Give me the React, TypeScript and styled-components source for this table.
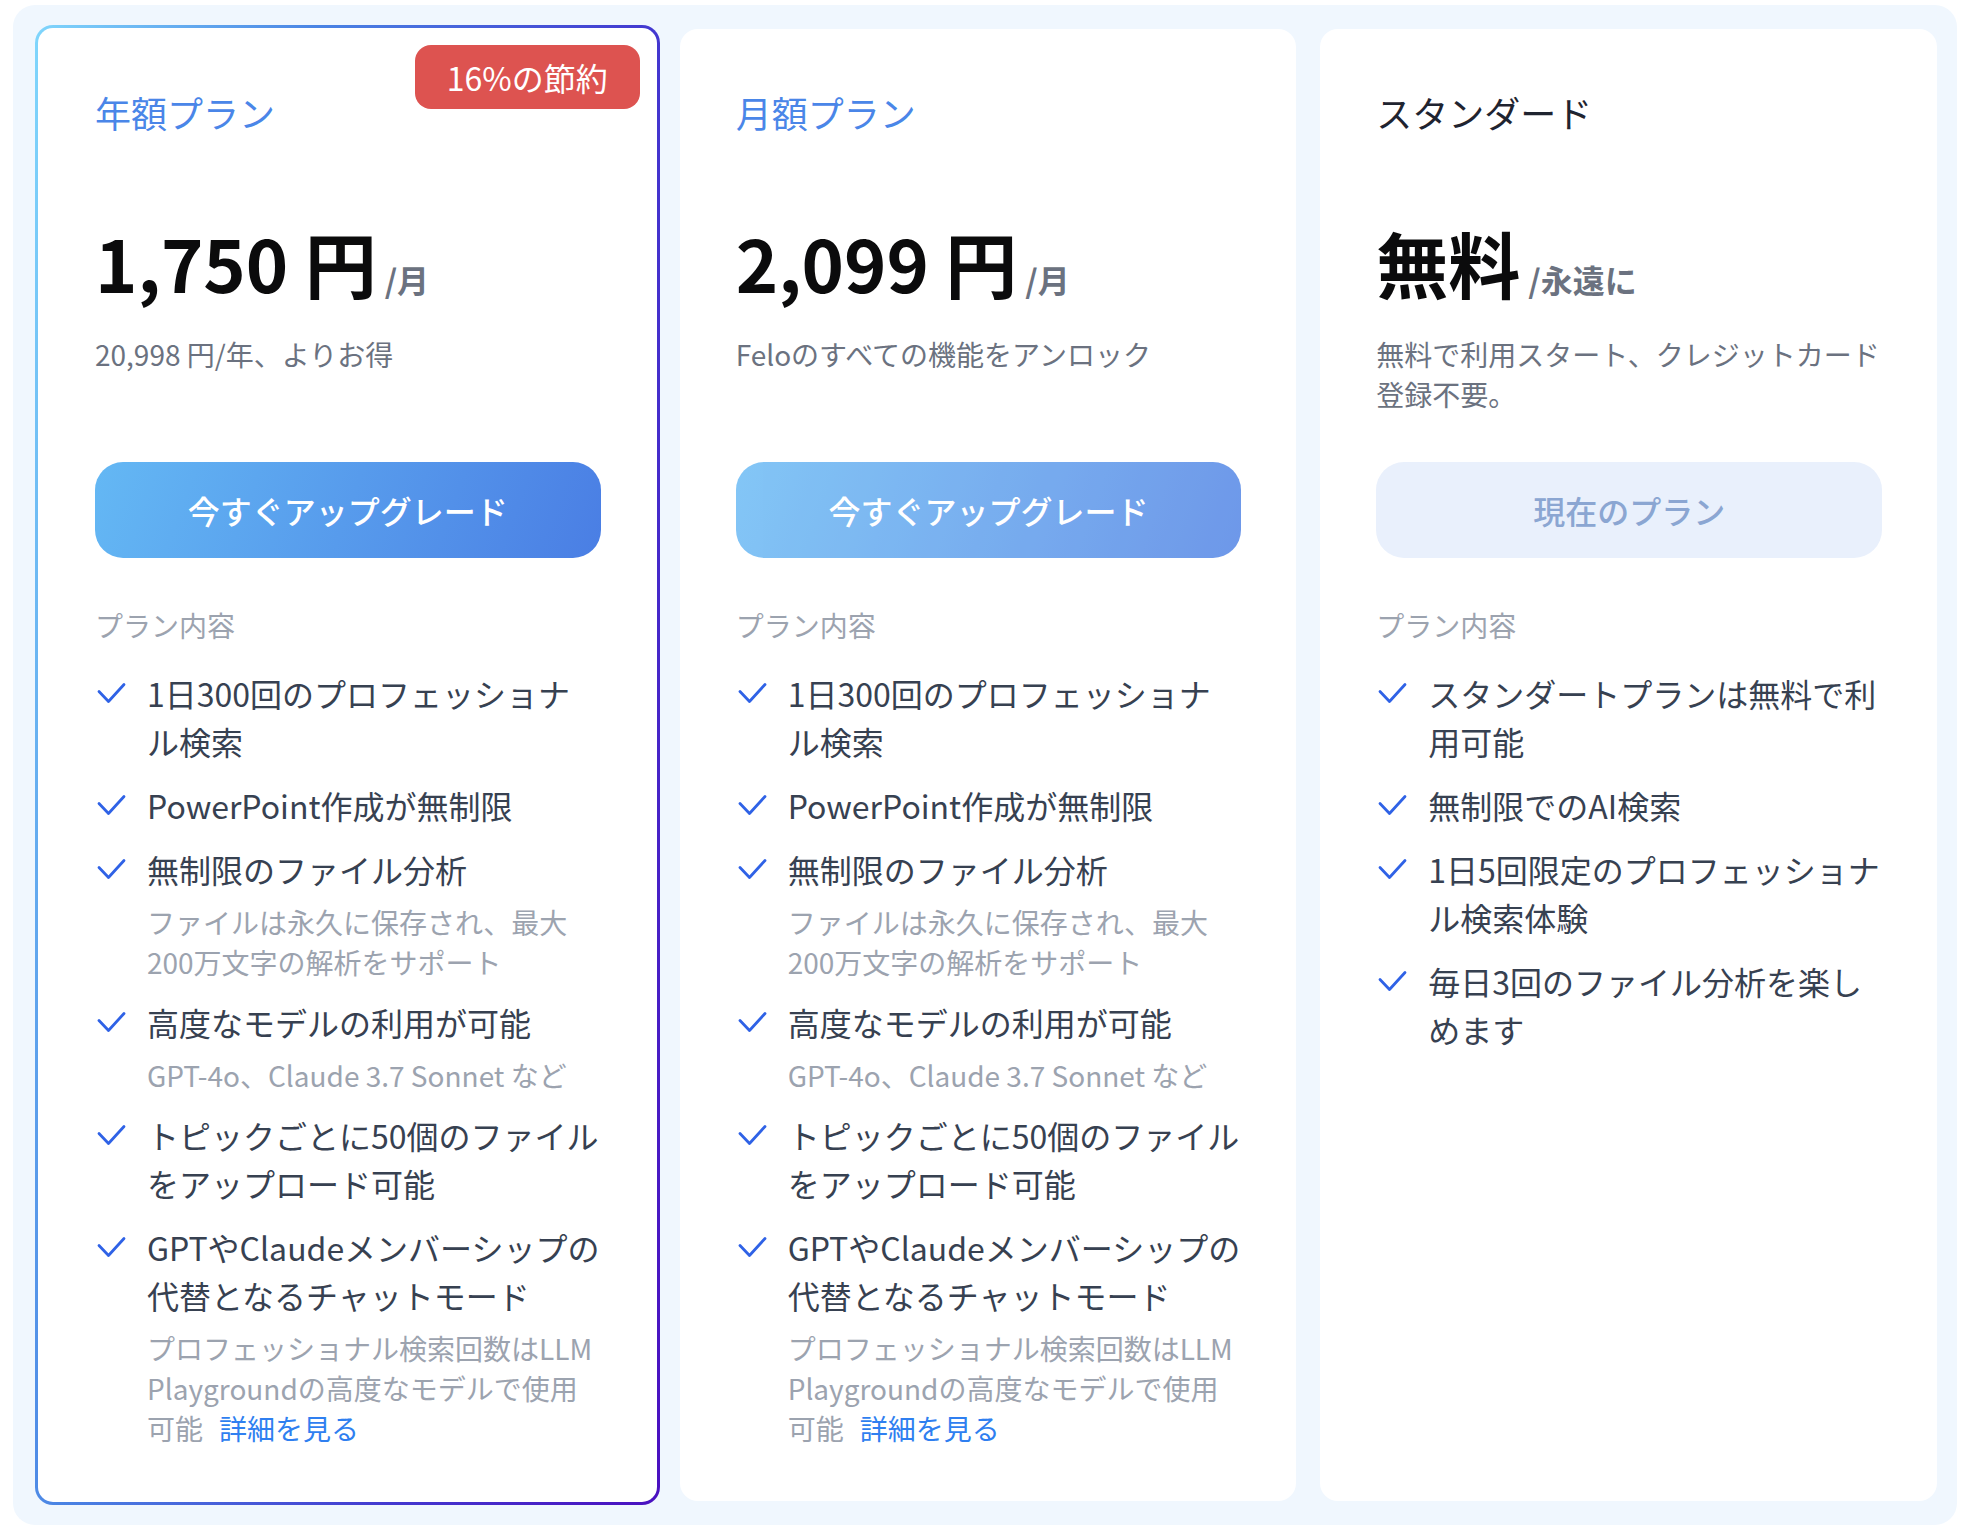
import React from 'react';
import styled, { createGlobalStyle, css } from 'styled-components';

const GlobalStyle = createGlobalStyle`
  html, body { margin: 0; padding: 0; background: #ffffff; }
  body {
    font-family: "Noto Sans CJK JP", "Noto Sans", sans-serif;
    -webkit-font-smoothing: antialiased;
  }
  * { box-sizing: border-box; }
`;

const Page = styled.div`
  padding: 5px 13px 13px;
`;

const Board = styled.div`
  background: #f0f7fe;
  border-radius: 22px;
  padding: 24px 20px 24px 26px;
  display: grid;
  grid-template-columns: repeat(3, minmax(0, 1fr));
  gap: 24px;
  align-items: stretch;
`;

const FeaturedFrame = styled.div`
  margin: -4px;
  padding: 3px;
  border-radius: 18px;
  background: linear-gradient(100deg, #80d6fc 0%, #4a84e4 32%, #4338d0 70%, #4a10c0 100%);
  display: flex;
`;

const Card = styled.div<{ $featured?: boolean }>`
  position: relative;
  flex: 1;
  background: #ffffff;
  border-radius: ${p => (p.$featured ? '15px' : '18px')};
  padding: ${p => (p.$featured ? '57px 56px 54px 57px' : '56px 55px 53px 56px')};
  display: flex;
  flex-direction: column;
`;

const Badge = styled.div`
  position: absolute;
  top: 17px;
  right: 17px;
  height: 64px;
  padding: 0 32px;
  border-radius: 16px;
  background: #dd5350;
  color: #ffffff;
  font-size: 32px;
  line-height: 64px;
`;

const Title = styled.div<{ $accent?: boolean }>`
  font-size: 36px;
  line-height: 54px;
  font-weight: 400;
  color: ${p => (p.$accent ? '#4a86e8' : '#1f2430')};
`;

const PriceRow = styled.div`
  margin-top: 87px;
  font-size: 72px;
  line-height: 72px;
  font-weight: 700;
  color: #0b0b0c;
  white-space: nowrap;
`;

const Per = styled.span`
  margin-left: 8px;
  font-size: 32px;
  line-height: 1;
  font-weight: 700;
  color: #6b7280;
`;

const Subtitle = styled.div`
  margin-top: 36px;
  min-height: 80px;
  font-size: 28px;
  line-height: 40px;
  color: #6b7280;
`;

const ActionButton = styled.button<{ $variant: 'primary' | 'soft' | 'current' }>`
  margin-top: 48px;
  width: 100%;
  height: 96px;
  border: none;
  border-radius: 28px;
  font-family: inherit;
  font-size: 32px;
  font-weight: 500;
  cursor: pointer;
  color: #ffffff;
  background: linear-gradient(110deg, #64b8f4 0%, #4a7ee4 100%);
  ${p =>
    p.$variant === 'soft' &&
    css`
      opacity: 0.8;
    `}
  ${p =>
    p.$variant === 'current' &&
    css`
      background: #e9f0fc;
      color: #8ba6d2;
      cursor: default;
    `}
`;

const SectionLabel = styled.div`
  margin-top: 47px;
  font-size: 28px;
  line-height: 40px;
  color: #9ca3af;
`;

const FeatureList = styled.ul`
  list-style: none;
  margin: 24px 0 0;
  padding: 0;
  display: flex;
  flex-direction: column;
  gap: 16px;
`;

const FeatureItem = styled.li`
  display: flex;
  align-items: flex-start;
`;

const CheckBox = styled.span`
  flex-shrink: 0;
  width: 52px;
  height: 48px;
  padding-left: 1px;
  display: flex;
  align-items: center;
`;

const FeatureBody = styled.div`
  flex: 1;
  min-width: 0;
`;

const FeatureText = styled.div`
  font-size: 32px;
  line-height: 48px;
  color: #374151;
`;

const FeatureNote = styled.div`
  margin-top: 9px;
  font-size: 28px;
  line-height: 40px;
  color: #9ca3af;
`;

const MoreLink = styled.a`
  margin-left: 16px;
  color: #2f7ff0;
  text-decoration: none;
  cursor: pointer;
`;

const Check = () => (
  <svg width="30" height="22" viewBox="0 0 30 22" fill="none">
    <path
      d="M3 9.5 L12.5 19.5 L28 2.5"
      stroke="#2f62e6"
      strokeWidth="2.8"
      strokeLinecap="round"
      strokeLinejoin="round"
    />
  </svg>
);

type Feature = { text: string; note?: string; link?: boolean };

type Plan = {
  title: string;
  accent: boolean;
  price: string;
  per: string;
  subtitle: string;
  button: string;
  variant: 'primary' | 'soft' | 'current';
  features: Feature[];
  badge?: string;
  featured?: boolean;
};

const proFeatures: Feature[] = [
  { text: '1日300回のプロフェッショナル検索' },
  { text: 'PowerPoint作成が無制限' },
  { text: '無制限のファイル分析', note: 'ファイルは永久に保存され、最大200万文字の解析をサポート' },
  { text: '高度なモデルの利用が可能', note: 'GPT-4o、Claude 3.7 Sonnet など' },
  { text: 'トピックごとに50個のファイルをアップロード可能' },
  {
    text: 'GPTやClaudeメンバーシップの代替となるチャットモード',
    note: 'プロフェッショナル検索回数はLLM Playgroundの高度なモデルで使用可能',
    link: true,
  },
];

const plans: Plan[] = [
  {
    title: '年額プラン',
    accent: true,
    price: '1,750 円',
    per: '/月',
    subtitle: '20,998 円/年、よりお得',
    button: '今すぐアップグレード',
    variant: 'primary',
    features: proFeatures,
    badge: '16%の節約',
    featured: true,
  },
  {
    title: '月額プラン',
    accent: true,
    price: '2,099 円',
    per: '/月',
    subtitle: 'Feloのすべての機能をアンロック',
    button: '今すぐアップグレード',
    variant: 'soft',
    features: proFeatures,
  },
  {
    title: 'スタンダード',
    accent: false,
    price: '無料',
    per: '/永遠に',
    subtitle: '無料で利用スタート、クレジットカード登録不要。',
    button: '現在のプラン',
    variant: 'current',
    features: [
      { text: 'スタンダートプランは無料で利用可能' },
      { text: '無制限でのAI検索' },
      { text: '1日5回限定のプロフェッショナル検索体験' },
      { text: '毎日3回のファイル分析を楽しめます' },
    ],
  },
];

const PlanCard: React.FC<{ plan: Plan }> = ({ plan }) => (
  <Card $featured={plan.featured}>
    {plan.badge && <Badge>{plan.badge}</Badge>}
    <Title $accent={plan.accent}>{plan.title}</Title>
    <PriceRow>
      {plan.price}
      <Per>{plan.per}</Per>
    </PriceRow>
    <Subtitle>{plan.subtitle}</Subtitle>
    <ActionButton $variant={plan.variant}>{plan.button}</ActionButton>
    <SectionLabel>プラン内容</SectionLabel>
    <FeatureList>
      {plan.features.map((f, i) => (
        <FeatureItem key={i}>
          <CheckBox>
            <Check />
          </CheckBox>
          <FeatureBody>
            <FeatureText>{f.text}</FeatureText>
            {f.note && (
              <FeatureNote>
                {f.note}
                {f.link && <MoreLink>詳細を見る</MoreLink>}
              </FeatureNote>
            )}
          </FeatureBody>
        </FeatureItem>
      ))}
    </FeatureList>
  </Card>
);

export default function App() {
  return (
    <>
      <GlobalStyle />
      <Page>
        <Board>
          {plans.map(plan =>
            plan.featured ? (
              <FeaturedFrame key={plan.title}>
                <PlanCard plan={plan} />
              </FeaturedFrame>
            ) : (
              <PlanCard key={plan.title} plan={plan} />
            )
          )}
        </Board>
      </Page>
    </>
  );
}
